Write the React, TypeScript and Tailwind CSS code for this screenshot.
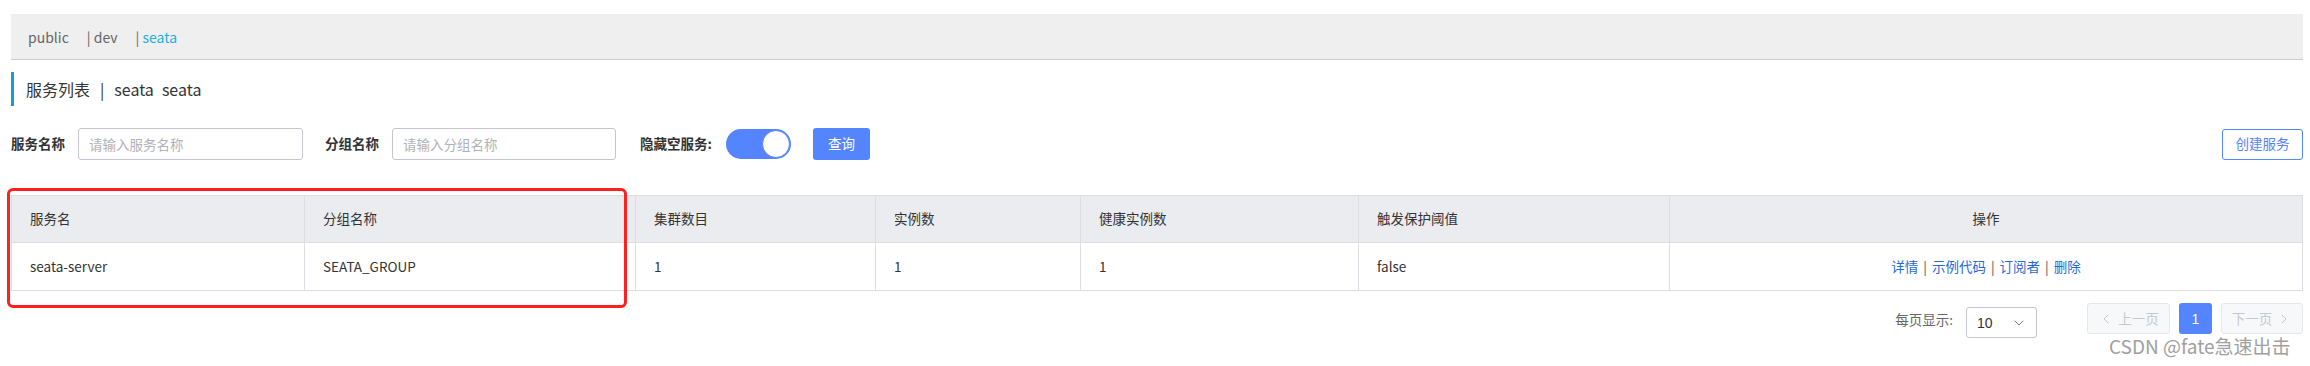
import { ChevronDown, ChevronLeft, ChevronRight } from 'lucide-react'

const FONT = "font-['Noto_Sans_CJK_SC','Liberation_Sans',sans-serif]"

const columns = ['服务名', '分组名称', '集群数目', '实例数', '健康实例数', '触发保护阈值', '操作']
const row = ['seata-server', 'SEATA_GROUP', '1', '1', '1', 'false']
const actions = ['详情', '示例代码', '订阅者', '删除']

function Breadcrumb() {
  return (
    <div className="flex h-[46px] items-center border-b border-[#cccccc] bg-[#efefef] pl-[17px] text-[14px] leading-none text-[#666]">
      <span>public</span>
      <span className="ml-[18px]">| dev</span>
      <span className="ml-[18px]">
        | <span className="text-[#1bb0dd]">seata</span>
      </span>
    </div>
  )
}

function Toggle() {
  return (
    <div className="flex h-[30px] w-[65px] items-center justify-end rounded-full bg-[#5584ff] pr-[1px]">
      <div className="h-[28px] w-[28px] rounded-full border border-[#5584ff] bg-white" />
    </div>
  )
}

function SearchRow() {
  return (
    <div className="mt-[22px] flex h-[32px] items-center text-[13.5px] leading-none">
      <span className="font-bold text-[#333]">服务名称</span>
      <input
        placeholder="请输入服务名称"
        className="ml-[13px] h-[32px] w-[225px] rounded-[3px] border border-[#c4c6cf] px-[10px] text-[13.5px] outline-none placeholder:text-[#b0b2b8]"
      />
      <span className="ml-[22px] font-bold text-[#333]">分组名称</span>
      <input
        placeholder="请输入分组名称"
        className="ml-[13px] h-[32px] w-[224px] rounded-[3px] border border-[#c4c6cf] px-[10px] text-[13.5px] outline-none placeholder:text-[#b0b2b8]"
      />
      <span className="ml-[24px] font-bold text-[#333]">隐藏空服务:</span>
      <div className="ml-[14px]">
        <Toggle />
      </div>
      <button
        type="button"
        className="ml-[22px] h-[32px] w-[57px] rounded-[3px] bg-[#5584ff] text-[13.5px] text-white"
      >
        查询
      </button>
      <button
        type="button"
        className="ml-auto h-[31px] w-[81px] rounded-[3px] border border-[#5584ff] bg-white text-[13.5px] text-[#5584ff]"
      >
        创建服务
      </button>
    </div>
  )
}

function ServiceTable() {
  const grid = 'grid grid-cols-[292px_331px_240px_205px_278px_311px_1fr]'
  return (
    <div className="mt-[35px] border border-[#dcdee3] text-[13.5px] leading-none text-[#333]">
      <div className={`${grid} h-[46px] bg-[#ebecf0]`}>
        {columns.map((c, i) => (
          <div
            key={c}
            className={`flex items-center border-[#dcdee3] ${i > 0 ? 'border-l' : ''} ${
              i === columns.length - 1 ? 'justify-center' : 'pl-[18px]'
            }`}
          >
            {c}
          </div>
        ))}
      </div>
      <div className={`${grid} h-[48px] border-t border-[#dcdee3] bg-white`}>
        {row.map((v, i) => (
          <div key={i} className={`flex items-center border-[#dcdee3] pl-[18px] ${i > 0 ? 'border-l' : ''}`}>
            {v}
          </div>
        ))}
        <div className="flex items-center justify-center border-l border-[#dcdee3] text-[#1f6bd6]">
          {actions.map((a, i) => (
            <span key={a} className="flex items-center">
              {i > 0 ? <span className="mx-[5px] text-[#555]">|</span> : null}
              {a}
            </span>
          ))}
        </div>
      </div>
    </div>
  )
}

function Pagination() {
  return (
    <div className="mt-[12px] flex items-start justify-end text-[13.5px] leading-none">
      <span className="mt-[10px] text-[#666]">每页显示:</span>
      <div className="ml-[13px] mt-[4px] flex h-[31px] w-[71px] items-center justify-between rounded-[3px] border border-[#c4c6cf] pl-[10px] pr-[9px] text-[#333]">
        <span className="font-['Liberation_Sans',sans-serif] text-[14px]">10</span>
        <ChevronDown className="h-[16px] w-[16px] text-[#777]" strokeWidth={1.5} />
      </div>
      <button
        type="button"
        className="ml-[50px] flex h-[31px] w-[83px] items-center justify-center gap-[4px] rounded-[3px] border border-[#e6e7eb] bg-[#f7f8fa] text-[#c5c8ce]"
      >
        <ChevronLeft className="h-[16px] w-[16px]" strokeWidth={1.5} />
        上一页
      </button>
      <button
        type="button"
        className="ml-[9px] h-[31px] w-[33px] rounded-[3px] bg-[#5584ff] font-['Liberation_Sans',sans-serif] text-[14px] text-white"
      >
        1
      </button>
      <button
        type="button"
        className="ml-[9px] flex h-[31px] w-[82px] items-center justify-center gap-[4px] rounded-[3px] border border-[#e6e7eb] bg-[#f7f8fa] text-[#c5c8ce]"
      >
        下一页
        <ChevronRight className="h-[16px] w-[16px]" strokeWidth={1.5} />
      </button>
    </div>
  )
}

export default function App() {
  return (
    <div className={`relative h-[366px] w-[2310px] overflow-hidden bg-white pl-[11px] pr-[7px] pt-[14px] ${FONT}`}>
      <Breadcrumb />

      <div className="mt-[12px] flex h-[34px] items-center border-l-[3px] border-[#1a9bd7] pl-[12px] text-[16px] leading-none text-[#333]">
        <span>服务列表</span>
        <span className="mx-[10px]">|</span>
        <span>seata</span>
        <span className="ml-[8px]">seata</span>
      </div>

      <SearchRow />
      <ServiceTable />
      <Pagination />

      {/* red annotation box drawn over the first two columns */}
      <div className="pointer-events-none absolute left-[7px] top-[188px] h-[120px] w-[620px] rounded-[6px] border-[3px] border-[#ff2020]" />

      {/* watermark */}
      <div className="pointer-events-none absolute left-[2109px] top-[336px] text-[19px] leading-none text-[#a0a0a0]">
        CSDN @fate急速出击
      </div>
    </div>
  )
}
